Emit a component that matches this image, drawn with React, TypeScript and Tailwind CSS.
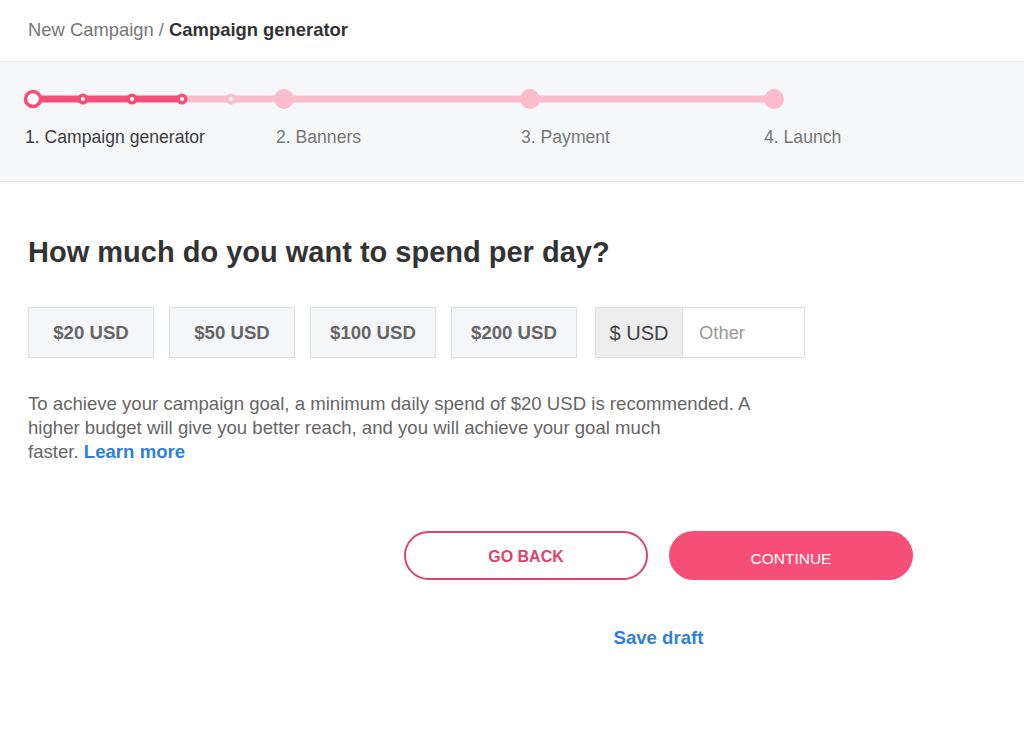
import React, { useState } from 'react';

const font = { fontFamily: '"Liberation Sans", Arial, sans-serif' };

const steps = [
  { label: '1. Campaign generator', width: 'w-[251px]', active: true },
  { label: '2. Banners', width: 'w-[245px]', active: false },
  { label: '3. Payment', width: 'w-[243px]', active: false },
  { label: '4. Launch', width: 'w-auto', active: false },
];

const amounts = ['$20 USD', '$50 USD', '$100 USD', '$200 USD'];

const Stepper: React.FC = () => (
  <svg width="800" height="22" viewBox="0 0 800 22" className="block">
    <line x1="182" y1="11" x2="774" y2="11" stroke="#fbbccb" strokeWidth="7" />
    <line x1="33" y1="11" x2="182" y2="11" stroke="#f44f79" strokeWidth="7" />
    {[284, 530, 774].map(x => (
      <circle key={x} cx={x} cy="11" r="10" fill="#fbbccb" />
    ))}
    <circle cx="231" cy="11" r="5.5" fill="#fbbccb" />
    <circle cx="231" cy="11" r="2" fill="#fff" />
    {[83, 132, 182].map(x => (
      <g key={x}>
        <circle cx={x} cy="11" r="5.5" fill="#f44f79" />
        <circle cx={x} cy="11" r="2" fill="#fff" />
      </g>
    ))}
    <circle cx="33" cy="11" r="7.5" fill="#fff" stroke="#f44f79" strokeWidth="3.5" />
  </svg>
);

export default function App() {
  const [selected, setSelected] = useState<string | null>(null);
  const [other, setOther] = useState('');

  return (
    <div className="min-h-[743px] bg-white text-[#333]" style={font}>
      {/* Breadcrumb */}
      <div className="h-[62px] px-7 pb-[2px] flex items-center border-b border-[#e9eaec] text-[18.4px]">
        <span className="text-[#777]">New Campaign /&nbsp;</span>
        <span className="font-bold text-[#333]">Campaign generator</span>
      </div>

      {/* Steps */}
      <div className="h-[120px] bg-[#f6f7f9] border-b border-[#e3e4e6] pt-[26px]">
        <Stepper />
        <div className="flex pl-[25px] mt-[14px] text-[17.6px]">
          {steps.map(s => (
            <div key={s.label} className={`${s.width} ${s.active ? 'text-[#3d3d3d]' : 'text-[#777]'}`}>
              {s.label}
            </div>
          ))}
        </div>
      </div>

      {/* Budget */}
      <div className="px-7 pt-[53px]">
        <h1 className="text-[29px] font-bold text-[#333] leading-[34px]">
          How much do you want to spend per day?
        </h1>

        <div className="flex gap-[15px] mt-[38px]">
          {amounts.map(a => (
            <button
              key={a}
              onClick={() => setSelected(a)}
              className={`h-[51px] w-[126px] border bg-[#f5f6f8] text-[18.6px] font-bold text-[#666] ${
                selected === a ? 'border-[#f44f79]' : 'border-[#dcdee2]'
              }`}
            >
              {a}
            </button>
          ))}
          <div className="flex h-[51px] border border-[#dcdee2] ml-[3px]">
            <div className="w-[87px] bg-[#eeeeee] border-r border-[#dcdee2] flex items-center justify-center text-[20px] text-[#444]">
              $ USD
            </div>
            <input
              value={other}
              onChange={e => setOther(e.target.value)}
              placeholder="Other"
              className="w-[121px] px-4 text-[18.4px] text-[#444] placeholder-[#999] outline-none bg-white"
            />
          </div>
        </div>

        <p className="mt-[34px] max-w-[780px] text-[18.6px] leading-[24px] text-[#666]">
          To achieve your campaign goal, a minimum daily spend of $20 USD is recommended. A
          <br />
          higher budget will give you better reach, and you will achieve your goal much
          <br />
          faster.{' '}
          <a href="#" className="font-bold text-[#2f80d9]">Learn more</a>
        </p>

        <div className="ml-[376px] w-[509px] mt-[67px]">
          <div className="flex gap-[21px]">
            <button className="h-[49px] w-[244px] rounded-full border-2 border-[#e0436a] text-[#e0436a] font-bold text-[16px] pt-[2px]">
              GO BACK
            </button>
            <button className="h-[49px] w-[244px] rounded-full bg-[#f54f78] text-white text-[15.5px] pt-[6px]">
              CONTINUE
            </button>
          </div>
          <div className="mt-[44px] text-center">
            <a href="#" className="text-[18.6px] font-bold text-[#2f80d9]">Save draft</a>
          </div>
        </div>
      </div>
    </div>
  );
}
